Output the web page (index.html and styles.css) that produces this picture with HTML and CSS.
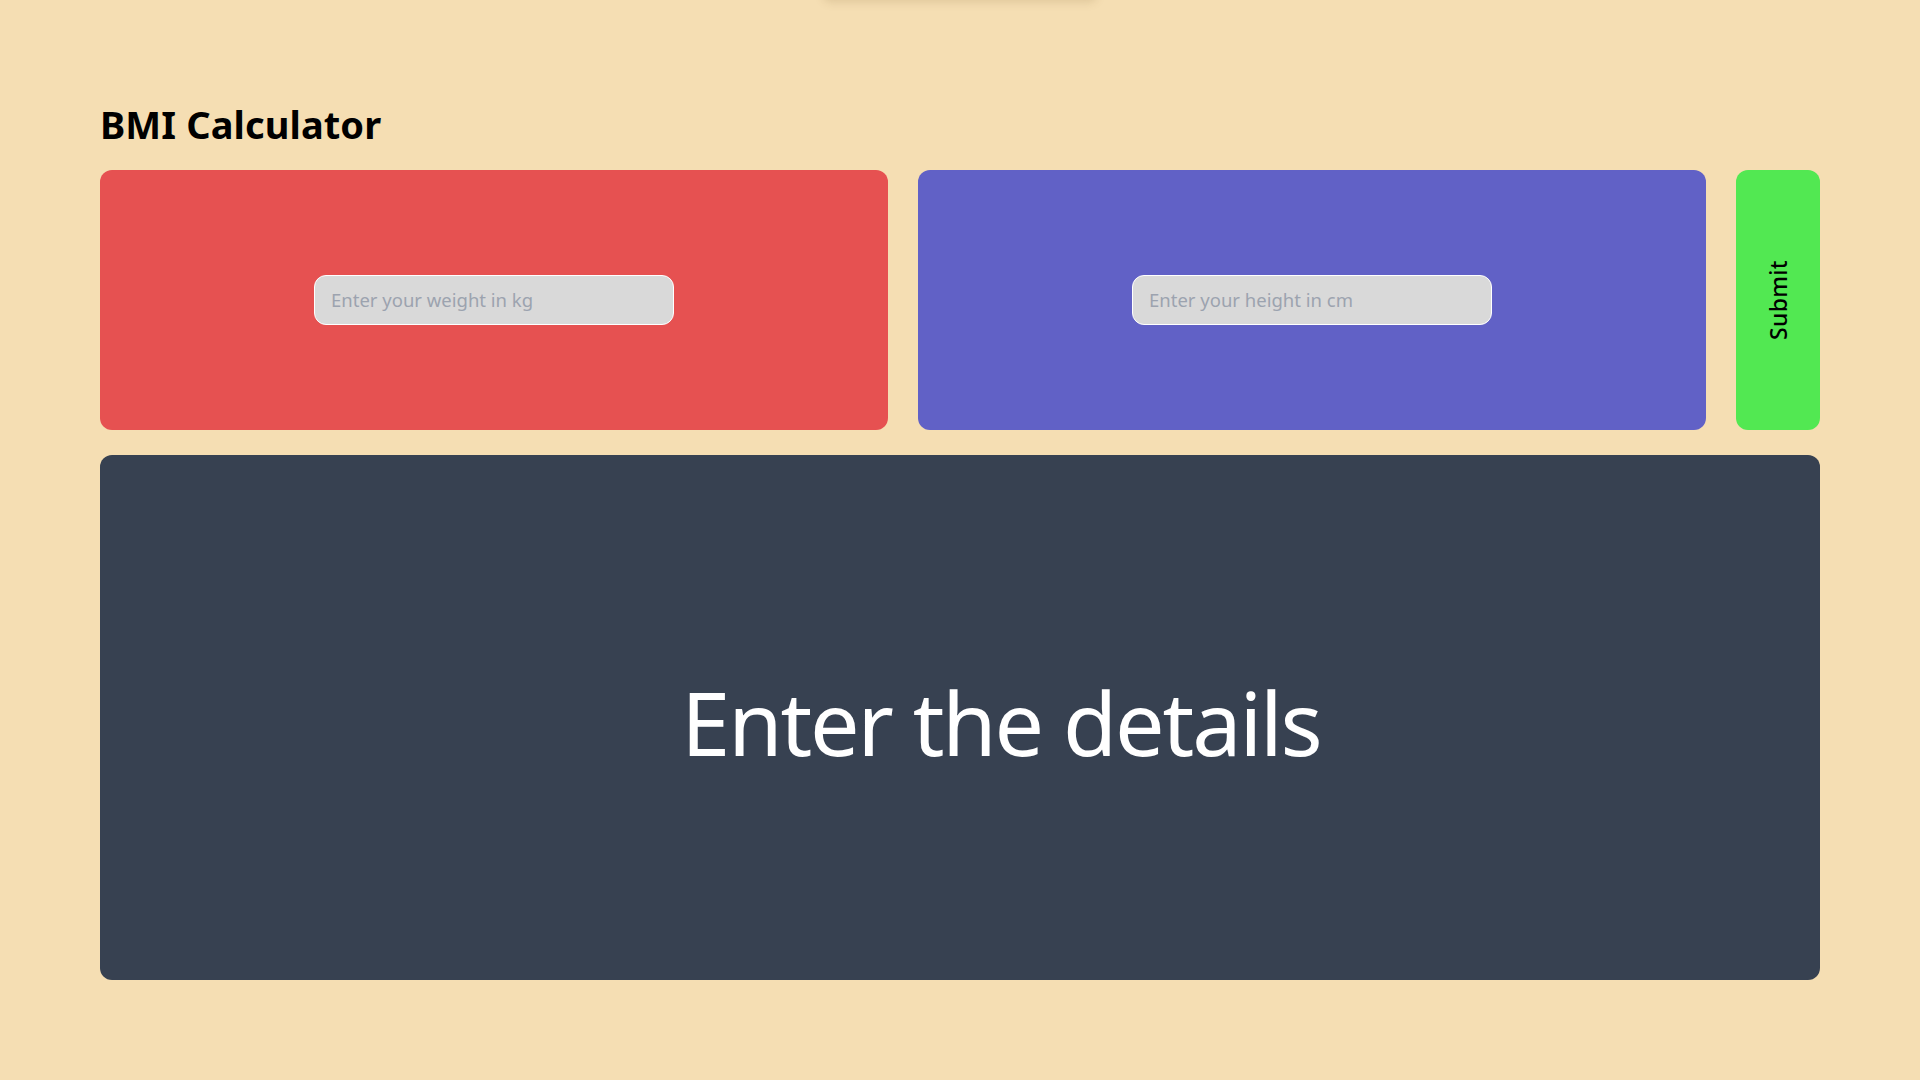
FILE: index.html
```html
<!DOCTYPE html>
<html lang="en">
<head>
<meta charset="utf-8">
<title>BMI Calculator</title>
<link rel="stylesheet" href="styles.css">
</head>
<body>
<div class="topbar"></div>
<main class="page">
  <h1 class="title">BMI Calculator</h1>
  <div class="row">
    <div class="card card-red">
      <input class="field" type="text" placeholder="Enter your weight in kg">
    </div>
    <div class="card card-blue">
      <input class="field" type="text" placeholder="Enter your height in cm">
    </div>
    <button class="submit" type="button"><span class="submit-label">Submit</span></button>
  </div>
  <section class="result">
    <p class="result-text">Enter the details</p>
  </section>
</main>
</body>
</html>
```

FILE: styles.css
```css
* { box-sizing: border-box; }

html, body {
  margin: 0;
  padding: 0;
}

body {
  background: #f5deb3;
  font-family: "Noto Sans", "Open Sans", sans-serif;
  height: 1080px;
  overflow: hidden;
  position: relative;
}

.topbar {
  position: absolute;
  top: -40px;
  left: 823px;
  width: 274px;
  height: 40px;
  border-radius: 8px;
  box-shadow: 0 2px 10px rgba(120, 90, 40, 0.18);
}

.page {
  padding: 0 100px;
}

.title {
  margin: 0;
  padding-top: 99px;
  height: 170px;
  font-size: 38px;
  font-weight: 700;
  letter-spacing: 0.1px;
  line-height: 50px;
  color: #000;
}

.row {
  display: flex;
  gap: 30px;
  height: 260px;
}

.card {
  flex: 1;
  border-radius: 12px;
  display: flex;
  align-items: center;
  justify-content: center;
}

.card-red { background: #e65151; }
.card-blue { background: #6161c6; }

.field {
  width: 360px;
  height: 50px;
  margin-top: -1px;
  border: 1px solid #ffffff;
  border-radius: 12px;
  background: #d9d9d9;
  padding: 0 16px;
  font-family: "Noto Sans", "Open Sans", sans-serif;
  font-size: 18.5px;
  color: #333;
  outline: none;
}

.field::placeholder {
  color: #9ca3af;
}

.submit {
  width: 84px;
  border: none;
  border-radius: 12px;
  background: #52e852;
  padding: 0;
  display: flex;
  align-items: center;
  justify-content: center;
  cursor: pointer;
}

.submit-label {
  display: block;
  transform: rotate(-90deg);
  font-family: "Noto Sans", "Open Sans", sans-serif;
  font-size: 23px;
  font-weight: 500;
  letter-spacing: 0.3px;
  color: #000;
  white-space: nowrap;
}

.result {
  margin-top: 25px;
  height: 525px;
  background: #374151;
  border-radius: 12px;
  display: flex;
  align-items: center;
  justify-content: center;
  padding-left: 82px;
  padding-top: 10px;
}

.result-text {
  margin: 0;
  font-size: 88px;
  font-weight: 400;
  letter-spacing: -2.1px;
  color: #ffffff;
  line-height: 1.2;
}
```
